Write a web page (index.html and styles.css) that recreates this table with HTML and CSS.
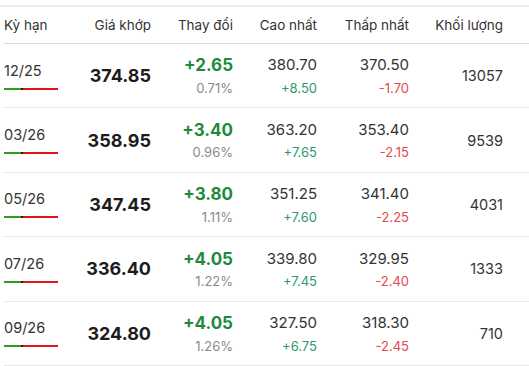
FILE: index.html
```html
<!DOCTYPE html>
<html lang="vi">
<head>
<meta charset="utf-8">
<title>Giá hợp đồng kỳ hạn</title>
<link rel="stylesheet" href="styles.css">
</head>
<body>
<div class="wrap">
  <div class="table">
    <div class="row head">
      <div class="c c1">Kỳ hạn</div>
      <div class="c">Giá khớp</div>
      <div class="c">Thay đổi</div>
      <div class="c">Cao nhất</div>
      <div class="c">Thấp nhất</div>
      <div class="c">Khối lượng</div>
    </div>

    <div class="row">
      <div class="c c1"><span class="term">12/25</span><span class="bar"><i class="g"></i><i class="k"></i><i class="r"></i></span></div>
      <div class="c price">374.85</div>
      <div class="c stack"><span class="chg">+2.65</span><span class="pct">0.71%</span></div>
      <div class="c stack"><span class="val">380.70</span><span class="up">+8.50</span></div>
      <div class="c stack"><span class="val">370.50</span><span class="down">-1.70</span></div>
      <div class="c vol">13057</div>
    </div>

    <div class="row">
      <div class="c c1"><span class="term">03/26</span><span class="bar"><i class="g"></i><i class="k"></i><i class="r"></i></span></div>
      <div class="c price">358.95</div>
      <div class="c stack"><span class="chg">+3.40</span><span class="pct">0.96%</span></div>
      <div class="c stack"><span class="val">363.20</span><span class="up">+7.65</span></div>
      <div class="c stack"><span class="val">353.40</span><span class="down">-2.15</span></div>
      <div class="c vol">9539</div>
    </div>

    <div class="row">
      <div class="c c1"><span class="term">05/26</span><span class="bar"><i class="g"></i><i class="k"></i><i class="r"></i></span></div>
      <div class="c price">347.45</div>
      <div class="c stack"><span class="chg">+3.80</span><span class="pct">1.11%</span></div>
      <div class="c stack"><span class="val">351.25</span><span class="up">+7.60</span></div>
      <div class="c stack"><span class="val">341.40</span><span class="down">-2.25</span></div>
      <div class="c vol">4031</div>
    </div>

    <div class="row">
      <div class="c c1"><span class="term">07/26</span><span class="bar"><i class="g"></i><i class="k"></i><i class="r"></i></span></div>
      <div class="c price">336.40</div>
      <div class="c stack"><span class="chg">+4.05</span><span class="pct">1.22%</span></div>
      <div class="c stack"><span class="val">339.80</span><span class="up">+7.45</span></div>
      <div class="c stack"><span class="val">329.95</span><span class="down">-2.40</span></div>
      <div class="c vol">1333</div>
    </div>

    <div class="row">
      <div class="c c1"><span class="term">09/26</span><span class="bar"><i class="g"></i><i class="k"></i><i class="r"></i></span></div>
      <div class="c price">324.80</div>
      <div class="c stack"><span class="chg">+4.05</span><span class="pct">1.26%</span></div>
      <div class="c stack"><span class="val">327.50</span><span class="up">+6.75</span></div>
      <div class="c stack"><span class="val">318.30</span><span class="down">-2.45</span></div>
      <div class="c vol">710</div>
    </div>
  </div>
</div>
</body>
</html>
```
FILE: styles.css
```css
html, body {
  margin: 0;
  padding: 0;
  background: #ffffff;
}
body {
  font-family: Inter, "Noto Sans", "Liberation Sans", sans-serif;
  color: #333333;
  padding-top: 5px;
}
.wrap {
  border-top: 2px solid #eceef2;
}
.table {
  margin-left: 4px;
}
.row {
  display: grid;
  grid-template-columns: 66px 81px 82px 84px 92px 94px;
  height: 64.4px;
  box-sizing: border-box;
  border-bottom: 1px solid #e6e9ee;
}
.row.head {
  height: 37px;
  border-bottom: 1px solid #d8dce2;
  font-size: 13.5px;
  color: #333333;
  align-items: center;
}
.c {
  text-align: right;
  display: flex;
  flex-direction: column;
  justify-content: center;
  align-items: flex-end;
  white-space: nowrap;
}
.c1 {
  text-align: left;
  align-items: flex-start;
}
.head .c {
  display: block;
}
.term {
  font-size: 14.5px;
  line-height: 18px;
  color: #333333;
}
.bar {
  display: flex;
  width: 54px;
  height: 2px;
  margin-top: 8px;
}
.bar i {
  display: block;
  height: 2px;
}
.bar .g { width: 17px; background: #2f9e1f; }
.bar .k { width: 2px; background: #1a1a1a; }
.bar .r { flex: 1; background: #e3141b; }
.price {
  font-size: 18px;
  font-weight: 700;
  color: #1c1c1c;
}
.stack span {
  display: block;
}
.chg {
  font-size: 17px;
  font-weight: 700;
  line-height: 22px;
  color: #1f8a3c;
}
.val {
  font-size: 15px;
  line-height: 22px;
  color: #333333;
}
.pct, .up, .down {
  font-size: 13px;
  line-height: 18px;
  margin-top: 2.5px;
}
.pct { color: #8a8a8a; }
.up { color: #2e9a68; }
.down { color: #e5484d; }
.vol {
  font-size: 14.5px;
  color: #333333;
}
```
